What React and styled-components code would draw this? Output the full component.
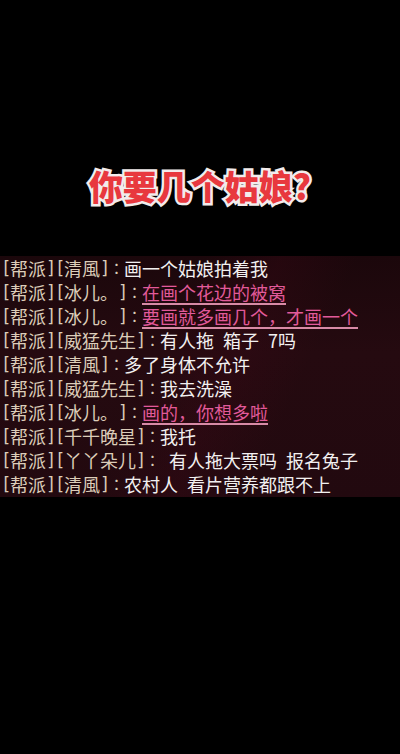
import styled, { createGlobalStyle } from "styled-components";

const GlobalStyle = createGlobalStyle`
	html, body {
		margin: 0;
		padding: 0;
		background: #000;
	}
	body {
		font-family: "Noto Sans CJK SC", "Noto Sans", sans-serif;
	}
`;

const lines = [
	{ name: "清風", text: "画一个姑娘拍着我" },
	{ name: "冰儿。", text: "在画个花边的被窝", pink: true },
	{ name: "冰儿。", text: "要画就多画几个，才画一个", pink: true },
	{ name: "威猛先生", text: "有人拖 箱子 7吗" },
	{ name: "清風", text: "多了身体不允许" },
	{ name: "威猛先生", text: "我去洗澡" },
	{ name: "冰儿。", text: "画的，你想多啦", pink: true },
	{ name: "千千晚星", text: "我托" },
	{ name: "丫丫朵儿", text: " 有人拖大票吗 报名兔子" },
	{ name: "清風", text: "农村人 看片营养都跟不上" },
];

function App() {
	return (
		<Page>
			<GlobalStyle />
			<Title>你要几个姑娘?</Title>
			<ChatPanel>
				{lines.map((line, i) => (
					<Row key={i}>
						<Tag>
							<Bracket>[</Bracket>帮派<Bracket>]</Bracket>
							<Bracket>[</Bracket>
							{line.name}
							<Bracket>]</Bracket>
							<Colon>：</Colon>
						</Tag>
						<Message $pink={line.pink}>{line.text}</Message>
					</Row>
				))}
			</ChatPanel>
		</Page>
	);
}

const Page = styled.div`
	width: 400px;
	height: 754px;
	background: #000;
	display: flex;
	flex-direction: column;
	overflow: hidden;
`;

const Title = styled.h1`
	margin: 166px 0 50px;
	height: 40px;
	line-height: 40px;
	text-align: center;
	font-family: "Noto Sans CJK SC", sans-serif;
	font-weight: 900;
	font-size: 34px;
	color: #e8383e;
	-webkit-text-stroke: 5px #f2ecec;
	paint-order: stroke fill;
`;

const ChatPanel = styled.div`
	height: 241px;
	padding-left: 1px;
	background:
		linear-gradient(115deg, rgba(0, 0, 0, 0) 40%, rgba(60, 8, 22, 0.3) 55%, rgba(0, 0, 0, 0) 70%),
		linear-gradient(180deg, #1b070b 0%, #250a10 40%, #22090f 100%);
	display: flex;
	flex-direction: column;
`;

const Row = styled.div`
	height: 24px;
	line-height: 24px;
	font-size: 18px;
	white-space: pre;
	display: flex;
	align-items: center;
`;

const Tag = styled.span`
	color: #dccdb9;
	display: flex;
	align-items: center;
`;

const Bracket = styled.span`
	display: inline-block;
	width: 9px;
	text-align: center;
	font-family: "DejaVu Sans Mono", monospace;
	font-size: 17px;
`;

const Colon = styled.span`
	display: inline-block;
	width: 15px;
	font-size: 15px;
	text-align: center;
	font-family: "Noto Sans CJK TC", sans-serif;
`;

const Message = styled.span`
	color: ${(p) => (p.$pink ? "#e25a9a" : "#f2f0f0")};
	word-spacing: 5px;
	text-decoration: ${(p) => (p.$pink ? "underline" : "none")};
	text-decoration-color: #d88aa6;
	text-underline-offset: 3px;
	text-decoration-thickness: 2px;
`;

export default App;
